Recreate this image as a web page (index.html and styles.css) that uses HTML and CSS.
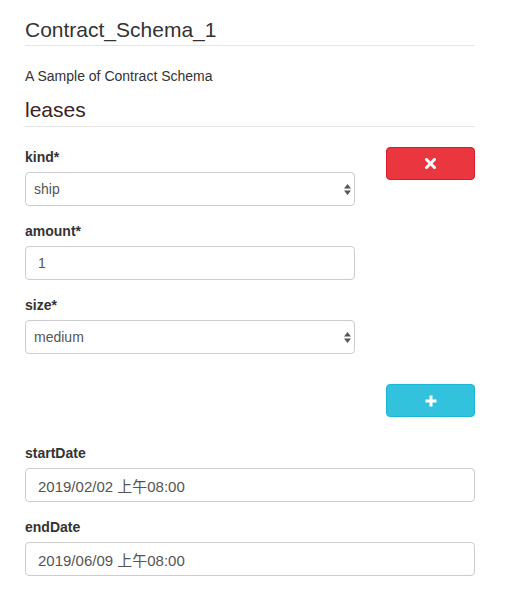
FILE: index.html
```html
<!DOCTYPE html>
<html>
<head>
<meta charset="utf-8">
<link rel="stylesheet" href="styles.css">
</head>
<body>
<div class="page">
  <h3 class="title">Contract_Schema_1</h3>
  <p class="desc">A Sample of Contract Schema</p>
  <h4 class="legend">leases</h4>
  <div class="item-row">
    <div class="fields">
      <div class="group">
        <label class="lbl">kind*</label>
        <div class="select-wrap">
          <select class="control"><option>ship</option></select>
          <svg class="arrows" width="7" height="11" viewBox="0 0 7 11"><path d="M3.5 0 L7 4.5 H0 Z M3.5 11 L7 6.5 H0 Z" fill="#555"/></svg>
        </div>
      </div>
      <div class="group">
        <label class="lbl">amount*</label>
        <input class="control num" type="text" value="1">
      </div>
      <div class="group">
        <label class="lbl">size*</label>
        <div class="select-wrap">
          <select class="control"><option>medium</option></select>
          <svg class="arrows" width="7" height="11" viewBox="0 0 7 11"><path d="M3.5 0 L7 4.5 H0 Z M3.5 11 L7 6.5 H0 Z" fill="#555"/></svg>
        </div>
      </div>
    </div>
    <div class="actions">
      <button class="btn btn-danger" type="button">
        <svg width="11" height="11" viewBox="0 0 11 11"><path d="M1.5 1.5 L9.5 9.5 M9.5 1.5 L1.5 9.5" stroke="#fff" stroke-width="3" stroke-linecap="square"/></svg>
      </button>
    </div>
  </div>
  <div class="add-row">
    <button class="btn btn-info" type="button">
      <svg width="12" height="12" viewBox="0 0 12 12"><path d="M6 0.5 V11.5 M0.5 6 H11.5" stroke="#fff" stroke-width="3"/></svg>
    </button>
  </div>
  <div class="group">
    <label class="lbl">startDate</label>
    <input class="control date" type="text" value="2019/02/02 上午08:00">
  </div>
  <div class="group">
    <label class="lbl">endDate</label>
    <input class="control date" type="text" value="2019/06/09 上午08:00">
  </div>
</div>
</body>
</html>
```

FILE: styles.css
```css
* { box-sizing: border-box; }
html, body { margin: 0; padding: 0; background: #fff; }
body {
  font-family: "Liberation Sans", Arial, "Noto Sans CJK TC", sans-serif;
  font-size: 14px;
  color: #333;
}
.page {
  width: 450px;
  margin-left: 25px;
  padding-top: 17px;
}
.title {
  margin: 0;
  font-size: 21px;
  font-weight: normal;
  line-height: 26px;
  padding-bottom: 2px;
  border-bottom: 1px solid #e5e5e5;
}
.desc {
  margin: 20px 0 0;
  line-height: 20px;
}
.legend {
  margin: 11px 0 0;
  font-size: 21px;
  font-weight: normal;
  line-height: 26px;
  padding-bottom: 3px;
  border-bottom: 1px solid #e5e5e5;
  color: #3a2226;
}
.item-row {
  display: flex;
  justify-content: space-between;
  margin-top: 20px;
}
.fields { width: 330px; }
.actions { width: 89px; }
.group { margin-bottom: 15px; }
.lbl {
  display: block;
  font-weight: bold;
  line-height: 20px;
  margin-bottom: 5px;
}
.control {
  display: block;
  width: 100%;
  height: 34px;
  border: 1px solid #ccc;
  border-radius: 4px;
  background: #fff;
  color: #555;
  font-family: "Liberation Sans", Arial, "Noto Sans CJK TC", sans-serif;
  font-size: 14px;
  padding: 0 8px;
  outline: none;
  -webkit-appearance: none;
  appearance: none;
}
.num { padding-left: 12px; }
.date { padding-left: 12px; font-size: 15px; }
.select-wrap { position: relative; }
.arrows {
  position: absolute;
  right: 4px;
  top: 12px;
  pointer-events: none;
}
.btn {
  display: flex;
  align-items: center;
  justify-content: center;
  width: 89px;
  height: 33px;
  border-radius: 4px;
  border: 1px solid transparent;
  padding: 0;
  cursor: pointer;
}
.btn-danger { background: #e9363f; border-color: #dc1a2b; }
.btn-info { background: #32c2de; border-color: #1bb6d4; }
.add-row {
  display: flex;
  justify-content: flex-end;
  margin-top: 15px;
  margin-bottom: 26px;
}
```
